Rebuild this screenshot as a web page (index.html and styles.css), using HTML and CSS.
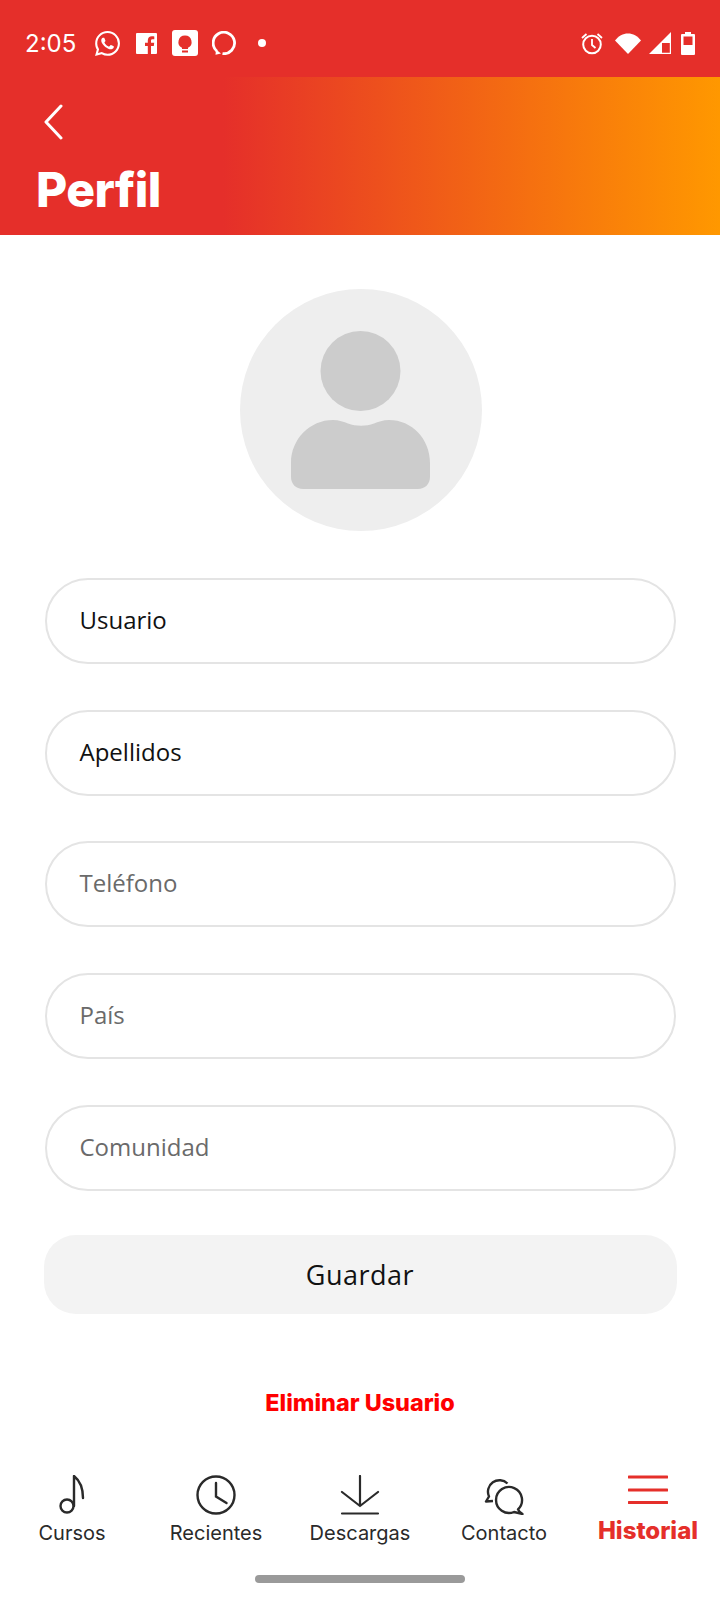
FILE: index.html
```html
<!DOCTYPE html>
<html lang="es">
<head>
  <meta charset="UTF-8">
  <title>Perfil</title>
  <link rel="stylesheet" href="styles.css">
</head>
<body>

  <div class="status-bar">
    <span class="time">2:05</span>
    <div class="status-icons">
      <svg class="ic-whatsapp" width="25" height="25" viewBox="0 0 24 24"><path fill="#fff" d="M17.472 14.382c-.297-.149-1.758-.867-2.03-.967-.273-.099-.471-.148-.67.15-.197.297-.767.966-.94 1.164-.173.199-.347.223-.644.075-.297-.15-1.255-.463-2.39-1.475-.883-.788-1.48-1.761-1.653-2.059-.173-.297-.018-.458.13-.606.134-.133.298-.347.446-.52.149-.174.198-.298.298-.497.099-.198.05-.371-.025-.52-.075-.149-.669-1.612-.916-2.207-.242-.579-.487-.5-.669-.51-.173-.008-.371-.01-.57-.01-.198 0-.52.074-.792.372-.272.297-1.04 1.016-1.04 2.479 0 1.462 1.065 2.875 1.213 3.074.149.198 2.096 3.2 5.077 4.487.709.306 1.262.489 1.694.625.712.227 1.36.195 1.871.118.571-.085 1.758-.719 2.006-1.413.248-.694.248-1.289.173-1.413-.074-.124-.272-.198-.57-.347m-5.421 7.403h-.004a9.87 9.87 0 01-5.031-1.378l-.361-.214-3.741.982.998-3.648-.235-.374a9.86 9.86 0 01-1.51-5.26c.001-5.45 4.436-9.884 9.888-9.884 2.64 0 5.122 1.03 6.988 2.898a9.825 9.825 0 012.893 6.994c-.003 5.45-4.437 9.884-9.885 9.884m8.413-18.297A11.815 11.815 0 0012.05 0C5.495 0 .16 5.335.157 11.892c0 2.096.547 4.142 1.588 5.945L.057 24l6.305-1.654a11.882 11.882 0 005.683 1.448h.005c6.554 0 11.89-5.335 11.893-11.893a11.821 11.821 0 00-3.48-8.413z"/></svg>
      <svg class="ic-fb" width="21" height="21" viewBox="0 0 21 21"><path fill="#fff" fill-rule="evenodd" d="M1 0h19a1 1 0 0 1 1 1v19a1 1 0 0 1-1 1h-5v-8h2.800l.4-3.200H15V7.800c0-1 .4-1.500 1.500-1.500H18.300V3.400C17.900 3.300 17 3.200 15.900 3.200c-2.500 0-4.100 1.500-4.100 4.200v2.400H9V13h2.800v8H1a1 1 0 0 1-1-1V1a1 1 0 0 1 1-1z"/></svg>
      <svg class="ic-keep" width="26" height="26" viewBox="0 0 26 26"><rect width="26" height="26" rx="3" fill="#fff"/><path fill="#e52f2a" d="M13 5.500a6.500 6.500 0 0 0-3 12.300V19h6v-1.200A6.500 6.500 0 0 0 13 5.500z"/><rect x="10" y="20.500" width="6" height="2" fill="#e52f2a"/></svg>
      <svg class="ic-alexa" width="24" height="24" viewBox="0 0 24 24"><path fill="none" stroke="#fff" stroke-width="2.800" d="M5 20.200A10.700 10.700 0 1 1 10.500 22.600"/><path fill="#fff" d="M4 18.500l5 3.900-5.500 1.300z"/></svg>
      <span class="dot"></span>
    </div>
    <div class="status-right">
      <svg class="ic-alarm" width="22" height="23" viewBox="0 0 22 23"><circle cx="11" cy="12.500" r="8.800" fill="none" stroke="#fff" stroke-width="2"/><path fill="none" stroke="#fff" stroke-width="1.800" d="M11 7v6l3.500 3M1 6l4.500-4M21 6l-4.500-4"/></svg>
      <svg class="ic-wifi" width="26" height="21" viewBox="0 0 26 21"><path fill="#fff" d="M0 7.500C3.500 3 8 .5 13 .5S22.500 3 26 7.500L13 21z"/></svg>
      <svg class="ic-signal" width="22" height="22" viewBox="0 0 22 22"><path fill="#fff" fill-rule="evenodd" d="M22 0v22H0zM20.800 11H13v9.800h7.800z"/></svg>
      <svg class="ic-battery" width="14" height="23" viewBox="0 0 14 23"><path fill="#fff" fill-rule="evenodd" d="M4 0h6v2h3a1 1 0 0 1 1 1v19a1 1 0 0 1-1 1H1a1 1 0 0 1-1-1V3a1 1 0 0 1 1-1h3zM2.500 4.500V13h9V4.500z"/></svg>
    </div>
  </div>

  <div class="top-header">
    <svg class="back" width="20" height="36" viewBox="0 0 20 36"><path fill="none" stroke="#fff" stroke-width="3" stroke-linecap="round" stroke-linejoin="round" d="M17 2 2 18l15 16"/></svg>
    <h1 class="title">Perfil</h1>
  </div>

  <div class="content">
    <div class="avatar">
      <svg width="242" height="242" viewBox="0 0 242 242">
        <circle cx="121" cy="121" r="121" fill="#eeeeee"/>
        <circle cx="120.500" cy="82" r="40" fill="#cccccc"/>
        <path fill="#cccccc" d="M51 188V174C51 150 70 131 93 131C99 131 104 133 108 134.500C116 137.500 126 137.500 134 134.500C138 133 143 131 149 131C172 131 190 150 190 174V188C190 195 185 200 178 200H63C56 200 51 195 51 188Z"/>
      </svg>
    </div>

    <form class="form">
      <div class="field filled">Usuario</div>
      <div class="field filled">Apellidos</div>
      <div class="field">Teléfono</div>
      <div class="field">País</div>
      <div class="field">Comunidad</div>
      <div class="save">Guardar</div>
    </form>

    <div class="delete">Eliminar Usuario</div>
  </div>

  <nav class="bottom-nav">
    <div class="nav-item">
      <svg width="40" height="40" viewBox="0 0 40 40"><path fill="none" stroke="#2a2a2a" stroke-width="2.400" stroke-linecap="round" d="M22 1v30M22 1c5 4 9 10 9 22"/><circle cx="15" cy="31" r="6.500" fill="none" stroke="#2a2a2a" stroke-width="2.400"/></svg>
      <span>Cursos</span>
    </div>
    <div class="nav-item">
      <svg width="40" height="40" viewBox="0 0 40 40"><circle cx="20" cy="20" r="18.500" fill="none" stroke="#2a2a2a" stroke-width="2.400"/><path fill="none" stroke="#2a2a2a" stroke-width="2.400" stroke-linecap="round" d="M20 8v13.500L30.500 28"/></svg>
      <span>Recientes</span>
    </div>
    <div class="nav-item">
      <svg width="40" height="40" viewBox="0 0 40 40"><path fill="none" stroke="#2a2a2a" stroke-width="2.200" stroke-linecap="round" stroke-linejoin="round" d="M20 1v30M2 17l18 14 18-14M2 38.500h36"/></svg>
      <span>Descargas</span>
    </div>
    <div class="nav-item">
      <svg width="40" height="40" viewBox="0 0 40 40"><path fill="none" stroke="#2a2a2a" stroke-width="2.400" stroke-linejoin="round" d="M34 34.400A13 13 0 1 0 30 37L38.500 39C36 37.500 34.800 36.500 34 34.400zM23.500 8.500A11.500 11.500 0 0 0 5 21.500L2 26.500 9 26"/></svg>
      <span>Contacto</span>
    </div>
    <div class="nav-item active">
      <svg width="40" height="40" viewBox="0 0 40 40"><path fill="none" stroke="#e52f2a" stroke-width="3" stroke-linecap="round" d="M1 2h38M1 15h38M1 27.500h38"/></svg>
      <span>Historial</span>
    </div>
  </nav>

  <div class="home-bar"><div class="home-pill"></div></div>

</body>
</html>
```

FILE: styles.css
```css
* {
  box-sizing: border-box;
}

body {
  margin: 0;
  padding: 0;
  width: 720px;
  height: 1600px;
  display: flex;
  flex-direction: column;
  background: #fff;
  font-family: 'Open Sans', sans-serif;
  overflow: hidden;
}

/* barra de estado */
.status-bar {
  height: 77px;
  background: #e52f2a;
  display: flex;
  align-items: center;
  padding: 9px 25px 0;
  color: #fff;
}

.time {
  font-family: Inter, sans-serif;
  font-size: 24px;
  width: 70px;
}

.status-icons {
  display: flex;
  align-items: center;
  gap: 15px;
}

.ic-whatsapp {
  margin-right: 1px;
}

.ic-alexa {
  margin-left: -1px;
}

.dot {
  width: 8px;
  height: 8px;
  border-radius: 50%;
  background: #fff;
  margin-left: 7px;
}

.status-right {
  margin-left: auto;
  display: flex;
  align-items: center;
  gap: 10px;
}

.ic-alarm {
  margin-right: 1px;
}

.ic-wifi {
  margin-left: 1px;
  margin-right: -2px;
}

/* cabecera */
.top-header {
  height: 158px;
  background: linear-gradient(90deg, #e52f2a 31%, #ff9800 100%);
  padding: 27px 0 0 36px;
}

.back {
  display: block;
  margin-left: 8px;
}

.title {
  margin: 20px 0 0;
  font-family: Inter, sans-serif;
  font-size: 48px;
  font-weight: 800;
  letter-spacing: -0.600px;
  line-height: 60px;
  color: #fff;
}

/* contenido */
.content {
  flex: 1;
  display: flex;
  flex-direction: column;
  align-items: center;
  padding-top: 54px;
}

.avatar {
  height: 242px;
  margin-left: 1px;
}

.avatar svg {
  display: block;
}

.form {
  width: 633px;
  margin-top: 47px;
  display: flex;
  flex-direction: column;
  gap: 45.700px;
}

.field {
  height: 86px;
  margin: 0 1px;
  border: 2px solid #e4e4e4;
  border-radius: 43px;
  padding-left: 33px;
  font-size: 24px;
  line-height: 80px;
  color: #6a6a6a;
}

.field.filled {
  color: #111;
}

.save {
  height: 79px;
  margin-top: -1px;
  border-radius: 32px;
  background: #f3f3f3;
  text-align: center;
  font-size: 27px;
  letter-spacing: 0.500px;
  line-height: 79px;
  color: #111;
}

.delete {
  margin-top: 74px;
  font-family: Inter, sans-serif;
  font-size: 23.400px;
  font-weight: 800;
  line-height: 30px;
  color: #ff0000;
}

/* navegacion */
.bottom-nav {
  display: grid;
  grid-template-columns: repeat(5, 144px);
}

.nav-item {
  display: flex;
  flex-direction: column;
  align-items: center;
  font-family: Inter, sans-serif;
  font-size: 20px;
  line-height: 26px;
  color: #2a2a2a;
}

.nav-item svg {
  display: block;
  margin-bottom: 5px;
}

.nav-item.active {
  font-size: 24px;
  font-weight: 800;
  color: #e52f2a;
}

.nav-item.active span {
  margin-top: -2px;
}

.home-bar {
  height: 54px;
  display: flex;
  justify-content: center;
  padding-top: 29px;
}

.home-pill {
  width: 210px;
  height: 8px;
  border-radius: 4px;
  background: #9a9a9a;
}
```
